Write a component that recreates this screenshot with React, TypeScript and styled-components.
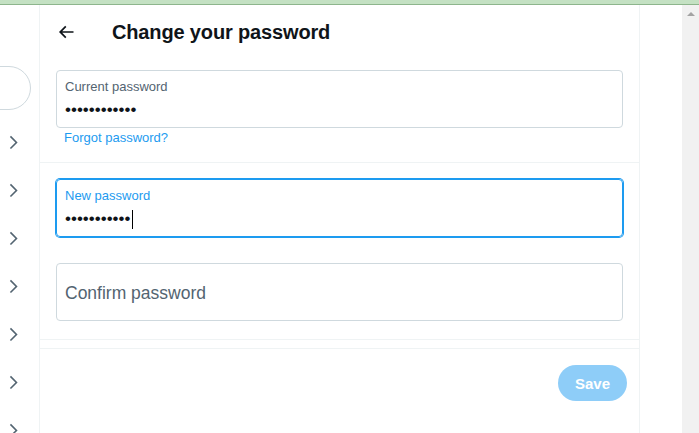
import React from "react";
import styled, { createGlobalStyle } from "styled-components";

const GlobalStyle = createGlobalStyle`
  html, body { margin: 0; padding: 0; background: #ffffff; }
  body { font-family: "Liberation Sans", Arial, sans-serif; overflow: hidden; }
  * { box-sizing: border-box; }
`;

const Window = styled.div`
  width: 699px;
  height: 433px;
  display: flex;
  flex-direction: column;
  overflow: hidden;
  background: #ffffff;
`;

const TopStrip = styled.div`
  flex: none;
  height: 5px;
  background: #c4e1c3;
  border-bottom: 1px solid #8db58c;
`;

const Body = styled.div`
  flex: 1;
  min-height: 0;
  display: flex;
`;

const Sidebar = styled.aside`
  flex: none;
  width: 40px;
  border-right: 1px solid #eff3f4;
  overflow: hidden;
  display: flex;
  flex-direction: column;
  padding-top: 61px;
`;

const SearchRow = styled.div`
  flex: none;
  height: 44px;
  display: flex;
  justify-content: flex-end;
  padding-right: 8px;
  margin-bottom: 8px;
`;

const SearchPill = styled.div`
  flex: none;
  width: 300px;
  height: 44px;
  border: 1px solid #cfd9de;
  border-radius: 22px;
`;

const NavRow = styled.div`
  flex: none;
  height: 48px;
  display: flex;
  align-items: center;
  justify-content: flex-end;
  padding-right: 16px;
  color: #536471;
`;

const Main = styled.main`
  flex: none;
  width: 600px;
  border-right: 1px solid #eff3f4;
  display: flex;
  flex-direction: column;
`;

const Header = styled.header`
  flex: none;
  height: 53px;
  display: flex;
  align-items: center;
  padding: 0 16px;
`;

const BackSlot = styled.div`
  width: 56px;
  display: flex;
  align-items: center;
  color: #0f1419;
`;

const Title = styled.h2`
  margin: 0;
  font-size: 20px;
  line-height: 24px;
  font-weight: 700;
  letter-spacing: -0.15px;
  color: #0f1419;
`;

const Section = styled.section<{ $pt: number; $pb: number; $gap?: number }>`
  display: flex;
  flex-direction: column;
  gap: ${(p) => p.$gap ?? 0}px;
  padding: ${(p) => p.$pt}px 16px ${(p) => p.$pb}px;
  border-bottom: 1px solid #eff3f4;
`;

const Spacer = styled.div`
  height: 9px;
  border-bottom: 1px solid #eff3f4;
`;

const Field = styled.div<{ $focused?: boolean; $empty?: boolean }>`
  height: 58px;
  border: 1px solid ${(p) => (p.$focused ? "#1d9bf0" : "#cfd9de")};
  box-shadow: ${(p) => (p.$focused ? "0 0 0 1px #1d9bf0" : "none")};
  border-radius: 4px;
  padding: ${(p) => (p.$empty ? "1px 8px 0" : "8px 8px 0")};
  display: flex;
  flex-direction: column;
  justify-content: ${(p) => (p.$empty ? "center" : "flex-start")};
`;

const Label = styled.div<{ $focused?: boolean }>`
  font-size: 13px;
  line-height: 16px;
  color: ${(p) => (p.$focused ? "#1d9bf0" : "#536471")};
`;

const Value = styled.div`
  margin-top: 3px;
  height: 24px;
  display: flex;
  align-items: center;
  font-size: 17px;
  line-height: 24px;
  color: #0f1419;
`;

const Caret = styled.span`
  display: inline-block;
  width: 1px;
  height: 19px;
  margin-left: 2px;
  background: #000000;
`;

const Placeholder = styled.div`
  font-size: 17.5px;
  line-height: 24px;
  color: #536471;
`;

const Link = styled.a`
  margin-top: 2px;
  padding-left: 8px;
  font-size: 13px;
  line-height: 16px;
  color: #1d9bf0;
  text-decoration: none;
`;

const Footer = styled.div`
  display: flex;
  justify-content: flex-end;
  padding: 16px 12px;
`;

const SaveButton = styled.button`
  height: 36px;
  padding: 0 17px;
  border: none;
  border-radius: 9999px;
  background: #8ecdf8;
  color: #ffffff;
  font-family: "Liberation Sans", Arial, sans-serif;
  font-size: 15px;
  font-weight: 700;
`;

const Gutter = styled.div`
  flex: 1;
`;

const Scrollbar = styled.div`
  flex: none;
  width: 17px;
  background: #f1f1f1;
  display: flex;
  justify-content: center;
  padding-top: 7px;
`;

const ScrollArrow = styled.div`
  width: 0;
  height: 0;
  border-left: 4px solid transparent;
  border-right: 4px solid transparent;
  border-bottom: 4px solid #a3a3a3;
`;

const Chevron = () => (
  <svg width="18.75" height="18.75" viewBox="0 0 24 24" fill="currentColor" aria-hidden>
    <path d="M14.586 12L7.543 4.96l1.414-1.42L17.414 12l-8.457 8.46-1.414-1.42L14.586 12z" />
  </svg>
);

const BackArrow = () => (
  <svg width="20" height="20" viewBox="0 0 24 24" fill="currentColor" aria-hidden>
    <path d="M7.414 13l5.043 5.04-1.414 1.42L3.586 12l7.457-7.46 1.414 1.42L7.414 11H21v2H7.414z" />
  </svg>
);

export default function App() {
  return (
    <>
      <GlobalStyle />
      <Window>
        <TopStrip />
        <Body>
          <Sidebar>
            <SearchRow>
              <SearchPill />
            </SearchRow>
            {Array.from({ length: 7 }).map((_, i) => (
              <NavRow key={i}>
                <Chevron />
              </NavRow>
            ))}
          </Sidebar>
          <Main>
            <Header>
              <BackSlot>
                <BackArrow />
              </BackSlot>
              <Title>Change your password</Title>
            </Header>
            <Section $pt={12} $pb={16}>
              <Field>
                <Label>Current password</Label>
                <Value>••••••••••••</Value>
              </Field>
              <Link href="#">Forgot password?</Link>
            </Section>
            <Section $pt={16} $pb={18} $gap={26}>
              <Field $focused>
                <Label $focused>New password</Label>
                <Value>
                  •••••••••••
                  <Caret />
                </Value>
              </Field>
              <Field $empty>
                <Placeholder>Confirm password</Placeholder>
              </Field>
            </Section>
            <Spacer />
            <Footer>
              <SaveButton>Save</SaveButton>
            </Footer>
          </Main>
          <Gutter />
          <Scrollbar>
            <ScrollArrow />
          </Scrollbar>
        </Body>
      </Window>
    </>
  );
}
